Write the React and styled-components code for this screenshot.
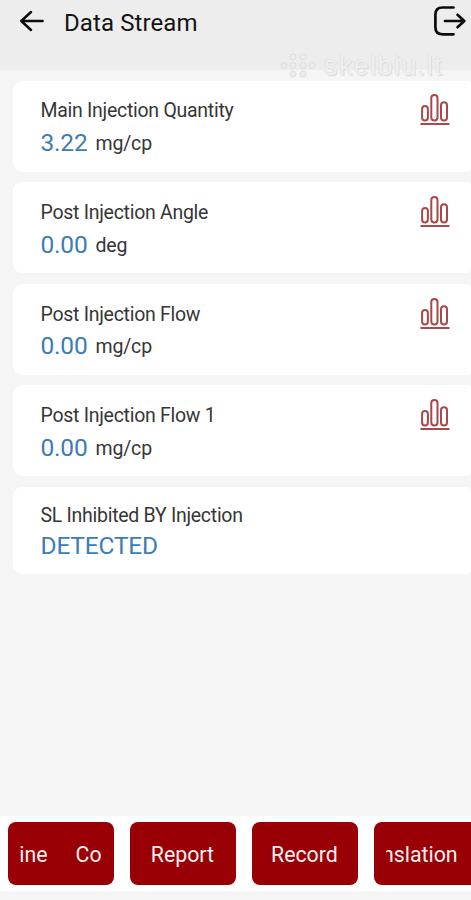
import React from "react";
import styled, { createGlobalStyle } from "styled-components";

const GlobalStyle = createGlobalStyle`
  * {
    box-sizing: border-box;
  }
  body {
    margin: 0;
    background: #f5f5f5;
    font-family: Roboto, "Liberation Sans", sans-serif;
    overflow: hidden;
  }
`;

const Screen = styled.div`
  display: flex;
  flex-direction: column;
  height: 900px;
  background: #f5f5f5;
  overflow: hidden;
`;

const Header = styled.header`
  position: relative;
  display: flex;
  align-items: flex-start;
  flex: 0 0 70px;
  background: #ededed;
`;

const IconButton = styled.button`
  display: block;
  padding: 0;
  border: 0;
  background: none;
  color: #0c0c0c;
  line-height: 0;
`;

const BackButton = styled(IconButton)`
  margin: 10px 0 0 19px;
`;

const ExitButton = styled(IconButton)`
  margin: 5px 4px 0 auto;
`;

const Title = styled.h1`
  margin: 9px 0 0 19px;
  font-size: 24px;
  font-weight: 400;
  line-height: 28px;
  letter-spacing: 0.1px;
  color: #141414;
`;

const Watermark = styled.div`
  position: absolute;
  top: 50px;
  left: 280px;
  z-index: 1;
  display: flex;
  align-items: center;
  gap: 7px;
  font-family: "Liberation Sans", Arial, sans-serif;
  font-size: 27px;
  line-height: 32px;
  color: #eeeeee;
  text-shadow: 1px 1px 1px #dadada, -1px -1px 1px #e4e4e4;
`;

const WatermarkText = styled.span`
  letter-spacing: 1.4px;
`;

const List = styled.main`
  display: flex;
  flex-direction: column;
  flex: 1;
  gap: 10.6px;
  padding: 10.5px 0 0 13px;
`;

const Card = styled.section`
  display: flex;
  justify-content: space-between;
  height: ${({ $short }) => ($short ? "87px" : "91px")};
  padding: ${({ $short }) => ($short ? "17px" : "18.9px")} 21px 0 27.5px;
  border-radius: 9px 4px 4px 9px;
  background: #fff;
`;

const Name = styled.div`
  font-size: 19.5px;
  line-height: 24px;
  letter-spacing: -0.28px;
  color: #363636;
`;

const Reading = styled.div`
  display: flex;
  align-items: baseline;
  gap: 8px;
  margin-top: ${({ $short }) => ($short ? "3px" : "4.7px")};
  line-height: 30px;
`;

const Value = styled.span`
  font-size: 24.5px;
  letter-spacing: -0.2px;
  color: #3b7db5;
`;

const Unit = styled.span`
  position: relative;
  top: -1px;
  font-size: 19.5px;
  letter-spacing: -0.15px;
  color: #363636;
`;

const ChartButton = styled(IconButton)`
  align-self: flex-start;
  margin-top: -6px;
  color: #a84848;
`;

const Footer = styled.footer`
  display: flex;
  gap: 16.2px;
  flex: 0 0 75px;
  margin-bottom: 9px;
  padding: 6px 0 6px 7.8px;
  background: #fff;
`;

const Action = styled.button`
  flex: 0 0 105.8px;
  min-width: 0;
  height: 63px;
  padding: 2px 12.5px 0 12px;
  border: 0;
  border-radius: 8px;
  background: #980006;
  color: #f8eeee;
  font-family: inherit;
  font-size: 21.3px;
  line-height: 28px;
`;

const Ticker = styled.span`
  display: flex;
  justify-content: ${({ $align }) => $align || "center"};
  gap: 28px;
  margin-right: ${({ $shift }) => $shift || 0}px;
  overflow: hidden;
`;

const BackIcon = () => (
  <svg width="26" height="22" viewBox="0 0 26 22" fill="none" stroke="currentColor" strokeWidth="2.5" strokeLinecap="round" strokeLinejoin="round">
    <path d="M23.6 11H2.4M12 2L2.3 11l9.7 9" />
  </svg>
);

const ExitIcon = () => (
  <svg width="34" height="32" viewBox="0 0 34 32" fill="none" stroke="currentColor" strokeWidth="2.7" strokeLinecap="round" strokeLinejoin="round">
    <path d="M20.5 2.5H9.5Q2.4 2.5 2.4 9.5v12.8Q2.4 29.3 9.5 29.3h11" />
    <path d="M12 16h18.5M24.5 9.8l6.8 6.2-6.8 6.2" />
  </svg>
);

const ChartIcon = () => (
  <svg width="30" height="33" viewBox="0 0 30 33" fill="none" stroke="currentColor" strokeWidth="2">
    <rect x="2.1" y="13" width="5.8" height="14.5" rx="2.9" />
    <rect x="11.3" y="2" width="6.2" height="25.5" rx="3.1" />
    <rect x="21" y="9.3" width="6" height="18.2" rx="3" />
    <path d="M0.5 31H29.5" />
  </svg>
);

const WatermarkIcon = () => (
  <svg width="37" height="28" viewBox="0 0 37 28" fill="#ececec" stroke="#dfdfdf" strokeWidth="1">
    <circle cx="13" cy="5" r="3" />
    <circle cx="23" cy="5" r="3" />
    <circle cx="4" cy="13.5" r="3" />
    <circle cx="13" cy="13.5" r="3" />
    <circle cx="23" cy="13.5" r="3" />
    <circle cx="32" cy="13.5" r="3" />
    <circle cx="13" cy="22" r="3" />
    <circle cx="23" cy="22" r="3" />
  </svg>
);

const items = [
  { name: "Main Injection Quantity", value: "3.22", unit: "mg/cp" },
  { name: "Post Injection Angle", value: "0.00", unit: "deg" },
  { name: "Post Injection Flow", value: "0.00", unit: "mg/cp" },
  { name: "Post Injection Flow 1", value: "0.00", unit: "mg/cp" },
  { name: "SL Inhibited BY Injection", value: "DETECTED" },
];

const StreamItem = ({ name, value, unit }) => (
  <Card $short={!unit}>
    <div>
      <Name>{name}</Name>
      <Reading $short={!unit}>
        <Value>{value}</Value>
        {unit && <Unit>{unit}</Unit>}
      </Reading>
    </div>
    {unit && (
      <ChartButton aria-label="Chart">
        <ChartIcon />
      </ChartButton>
    )}
  </Card>
);

const App = () => (
  <Screen>
    <GlobalStyle />
    <Header>
      <BackButton aria-label="Back">
        <BackIcon />
      </BackButton>
      <Title>Data Stream</Title>
      <ExitButton aria-label="Exit">
        <ExitIcon />
      </ExitButton>
      <Watermark>
        <WatermarkIcon />
        <WatermarkText>skelbiu.lt</WatermarkText>
      </Watermark>
    </Header>
    <List>
      {items.map((item) => (
        <StreamItem key={item.name} {...item} />
      ))}
    </List>
    <Footer>
      <Action>
        <Ticker>
          <span>ine</span>
          <span>Co</span>
        </Ticker>
      </Action>
      <Action>
        <Ticker>Report</Ticker>
      </Action>
      <Action>
        <Ticker>Record</Ticker>
      </Action>
      <Action>
        <Ticker $align="flex-end" $shift={9.5}>
          <span>nslation</span>
        </Ticker>
      </Action>
    </Footer>
  </Screen>
);

export default App;
